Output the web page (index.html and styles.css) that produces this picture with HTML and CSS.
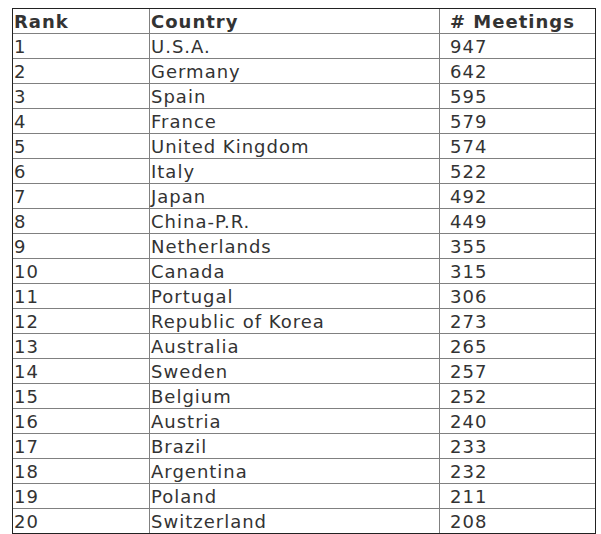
FILE: index.html
```html
<!DOCTYPE html>
<html>
<head>
<meta charset="utf-8">
<link rel="stylesheet" href="styles.css">
</head>
<body>
<table class="rank-table">
<colgroup><col class="c1"><col class="c2"><col class="c3"></colgroup>
<thead>
<tr><th>Rank</th><th>Country</th><th class="num">#&nbsp;Meetings</th></tr>
</thead>
<tbody>
<tr><td>1</td><td>U.S.A.</td><td class="num">947</td></tr>
<tr><td>2</td><td>Germany</td><td class="num">642</td></tr>
<tr><td>3</td><td>Spain</td><td class="num">595</td></tr>
<tr><td>4</td><td>France</td><td class="num">579</td></tr>
<tr><td>5</td><td>United Kingdom</td><td class="num">574</td></tr>
<tr><td>6</td><td>Italy</td><td class="num">522</td></tr>
<tr><td>7</td><td>Japan</td><td class="num">492</td></tr>
<tr><td>8</td><td>China-P.R.</td><td class="num">449</td></tr>
<tr><td>9</td><td>Netherlands</td><td class="num">355</td></tr>
<tr><td>10</td><td>Canada</td><td class="num">315</td></tr>
<tr><td>11</td><td>Portugal</td><td class="num">306</td></tr>
<tr><td>12</td><td>Republic of Korea</td><td class="num">273</td></tr>
<tr><td>13</td><td>Australia</td><td class="num">265</td></tr>
<tr><td>14</td><td>Sweden</td><td class="num">257</td></tr>
<tr><td>15</td><td>Belgium</td><td class="num">252</td></tr>
<tr><td>16</td><td>Austria</td><td class="num">240</td></tr>
<tr><td>17</td><td>Brazil</td><td class="num">233</td></tr>
<tr><td>18</td><td>Argentina</td><td class="num">232</td></tr>
<tr><td>19</td><td>Poland</td><td class="num">211</td></tr>
<tr><td>20</td><td>Switzerland</td><td class="num">208</td></tr>
</tbody>
</table>
</body>
</html>
```
FILE: styles.css
```css
html, body { background: #fff; }
body {
  margin: 8px 0 0 12px;
  font-family: "DejaVu Sans", Verdana, sans-serif;
  font-size: 18px;
  color: #333;
}
.rank-table {
  border-collapse: separate;
  border-spacing: 0;
  border: 1px solid #222;
  table-layout: fixed;
  width: 584px;
}
.c1 { width: 137px; }
.c2 { width: 290px; }
.c3 { width: 155px; }
.rank-table th,
.rank-table td {
  padding: 1px 0 0 1px;
  height: 23px;
  line-height: 23px;
  text-align: left;
  vertical-align: top;
  white-space: nowrap;
  letter-spacing: 1px;
  border-right: 1px solid #808080;
  border-bottom: 1px solid #808080;
  box-sizing: content-box;
}
.rank-table th { font-weight: bold; }
.rank-table .num { padding-left: 10px; }
.rank-table tr > :last-child { border-right: none; }
.rank-table tbody tr:last-child > * { border-bottom: none; }
```
